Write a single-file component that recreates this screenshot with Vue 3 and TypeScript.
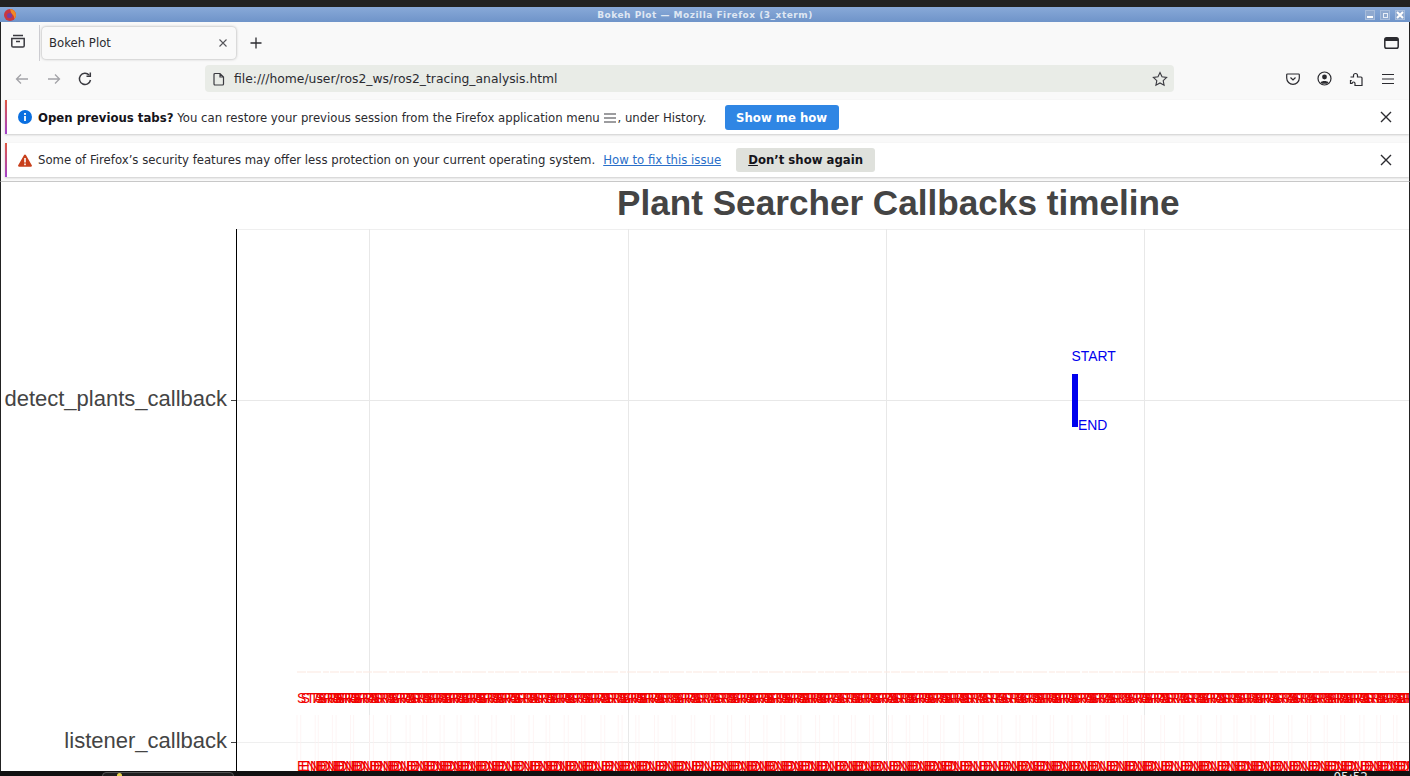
<script setup lang="ts">
function seq(start: number, end: number, step: number, seed: number): number[] {
  const out: number[] = []
  let x = start
  let s = seed
  while (x < end) {
    out.push(Math.round(x * 10) / 10)
    s = (s * 9301 + 49297) % 233280
    out.push(Math.round((x + 3 + (s / 233280) * 1.5) * 10) / 10)
    s = (s * 9301 + 49297) % 233280
    x += step * (0.92 + (s / 233280) * 0.16)
  }
  return out
}
const starts = seq(297, 1410, 18, 7)
const ends = seq(297, 1410, 18, 7)
const gridX = [369, 628, 886, 1144]
</script>

<template>
  <div class="screen">
    <div class="topstrip"></div>
    <div class="titlebar">
      <svg class="fx" width="14" height="14" viewBox="0 0 14 14">
        <circle cx="7" cy="7" r="6" fill="#c9373f" />
        <path d="M7 1a6 6 0 0 1 6 6c0 2-1 3-2 4 .5-2-.5-4-2-5-1-.7-1-2-2-5z" fill="#f08a24" />
        <circle cx="6.5" cy="7.5" r="2.6" fill="#7a3fa0" />
      </svg>
      <span class="wintitle">Bokeh Plot — Mozilla Firefox (3_xterm)</span>
      <div class="winbtns">
        <span class="winbtn"><i class="b-min"></i></span>
        <span class="winbtn"><i class="b-max"></i></span>
        <span class="winbtn"><svg width="8" height="8" viewBox="0 0 8 8"><path d="M1 1l6 6M7 1L1 7" stroke="#fff" stroke-width="2" /></svg></span>
      </div>
    </div>

    <div class="browser">
      <div class="tabrow">
        <span class="tabs-icon">
          <svg width="16" height="16" viewBox="0 0 16 16" fill="none" stroke="#3a3a40" stroke-width="1.5">
            <path d="M3 2.5h10M1.8 5.5h12.4v7.2a1.3 1.3 0 0 1-1.3 1.3H3.100a1.300 1.300 0 0 1-1.300-1.300z" />
            <path d="M6 8.500h4" />
          </svg>
        </span>
        <span class="tabsep"></span>
        <div class="tab">
          <span class="tabtitle">Bokeh Plot</span>
          <svg width="10" height="10" viewBox="0 0 10 10"><path d="M1.500 1.500l7 7M8.500 1.500l-7 7" stroke="#55555a" stroke-width="1.100" /></svg>
        </div>
        <svg class="plus" width="12" height="12" viewBox="0 0 12 12"><path d="M6 .5v11M.5 6h11" stroke="#2b2b30" stroke-width="1.300" /></svg>
        <span class="grow"></span>
        <svg class="winlist" width="15" height="12" viewBox="0 0 15 12" fill="none"><rect x=".8" y=".8" width="13.400" height="10.400" rx="1.800" stroke="#2b2b30" stroke-width="1.500" /><rect x="1" y="1" width="13" height="3" fill="#2b2b30" /></svg>
      </div>

      <div class="navrow">
        <svg width="16" height="16" viewBox="0 0 16 16" fill="none" stroke="#a3a3a8" stroke-width="1.300"><path d="M14 8H2.500M7 3.500L2.500 8 7 12.500" /></svg>
        <svg class="fwd" width="16" height="16" viewBox="0 0 16 16" fill="none" stroke="#a3a3a8" stroke-width="1.300"><path d="M2 8h11.500M9 3.500L13.500 8 9 12.500" /></svg>
        <svg class="reload" width="16" height="16" viewBox="0 0 16 16" fill="none" stroke="#3a3a40" stroke-width="1.500"><path d="M13.500 9a5.600 5.600 0 1 1-1.400-5" /><path d="M13.300 1.500v3.800H9.500" /></svg>
        <div class="urlbar">
          <svg width="14" height="14" viewBox="0 0 14 14" fill="none" stroke="#3a3a40" stroke-width="1.200"><path d="M3 1.500h5l3.500 3.500v7a1 1 0 0 1-1 1H3a1 1 0 0 1-1-1v-9.500a1 1 0 0 1 1-1zM8 1.500V5h3.500" /></svg>
          <span class="url">file:///home/user/ros2_ws/ros2_tracing_analysis.html</span>
          <span class="grow"></span>
          <svg width="16" height="16" viewBox="0 0 16 16" fill="none" stroke="#3a3a40" stroke-width="1.100"><path d="M8 1.500l2 4.300 4.600.6-3.400 3.200.9 4.700L8 12l-4.100 2.300.9-4.700L1.400 6.400 6 5.800z" /></svg>
        </div>
        <div class="navright">
          <svg width="14" height="14" viewBox="0 0 14 14" fill="none" stroke="#2b2b30" stroke-width="1.200"><path d="M1.500 2h11a.8.8 0 0 1 .8.800V6a6.300 6.300 0 0 1-12.600 0V2.800a.8.800 0 0 1 .8-.8z" /><path d="M4.500 5.500L7 8l2.500-2.500" /></svg>
          <svg width="15" height="15" viewBox="0 0 15 15"><circle cx="7.500" cy="7.500" r="6.500" fill="none" stroke="#2b2b30" stroke-width="1.200" /><circle cx="7.500" cy="6" r="2.400" fill="#2b2b30" /><path d="M3.500 11.500c1-2 7-2 8 0l-1.500 1.300h-5z" fill="#2b2b30" /></svg>
          <svg width="15" height="16" viewBox="0 0 15 16" fill="none" stroke="#2b2b30" stroke-width="1.200"><path d="M1.500 6h3V4.500a2 2 0 0 1 4 0V6h3.500a1 1 0 0 1 1 1v7.500H6v-2a1.500 1.500 0 0 0-3 0v0H1.500V9.500h1.200" /></svg>
          <svg width="14" height="12" viewBox="0 0 14 12" stroke="#2b2b30" stroke-width="1.100"><path d="M1 1.500h12M1 6h12M1 10.500h12" /></svg>
        </div>
      </div>

      <div class="notice first">
        <svg class="nicon" width="14" height="14" viewBox="0 0 14 14"><circle cx="7" cy="7" r="7" fill="#0a6fe0" /><rect x="6.100" y="6" width="1.800" height="5" fill="#fff" /><rect x="6.100" y="3" width="1.800" height="1.900" fill="#fff" /></svg>
        <span class="ntext"><b>Open previous tabs?</b> You can restore your previous session from the Firefox application menu
          <svg class="inlinemenu" width="12" height="10" viewBox="0 0 12 10" stroke="#3a3a40" stroke-width="1.100"><path d="M0 1h12M0 5h12M0 9h12" /></svg>, under History.</span>
        <button class="btn primary">Show me how</button>
        <span class="grow"></span>
        <svg class="nclose" width="12" height="12" viewBox="0 0 12 12"><path d="M1 1l10 10M11 1L1 11" stroke="#2b2b30" stroke-width="1.400" /></svg>
      </div>
      <div class="notice second">
        <svg class="nicon" width="14" height="13" viewBox="0 0 14 13"><path d="M7 .5a1 1 0 0 1 .9.500l5.900 10.300a1 1 0 0 1-.9 1.500H1.100a1 1 0 0 1-.9-1.500L6.100 1A1 1 0 0 1 7 .5z" fill="#c8401c" /><rect x="6.200" y="4" width="1.600" height="4.500" fill="#fff" /><rect x="6.200" y="9.500" width="1.600" height="1.700" fill="#fff" /></svg>
        <span class="ntext">Some of Firefox’s security features may offer less protection on your current operating system.</span>
        <a class="nlink">How to fix this issue</a>
        <button class="btn neutral"><u>D</u>on’t show again</button>
        <span class="grow"></span>
        <svg class="nclose" width="12" height="12" viewBox="0 0 12 12"><path d="M1 1l10 10M11 1L1 11" stroke="#2b2b30" stroke-width="1.400" /></svg>
      </div>
    </div>

    <div class="page">
      <div class="plot-title">Plant Searcher Callbacks timeline</div>
      <svg class="plot" width="1408" height="542" viewBox="1 229 1408 542">
        <line x1="237" x2="1409" y1="229.500" y2="229.500" stroke="#efefef" />
        <line v-for="x in gridX" :key="x" :x1="x + 0.5" :x2="x + 0.5" y1="229" y2="771" stroke="#e8e8e8" />
        <line x1="237" x2="1409" y1="400.500" y2="400.500" stroke="#e8e8e8" />
        <line x1="237" x2="1409" y1="742.500" y2="742.500" stroke="#efefef" />
        <line x1="236.500" x2="236.500" y1="229" y2="771" stroke="#000" />
        <line x1="231" x2="236" y1="400.500" y2="400.500" stroke="#444" />
        <line x1="231" x2="236" y1="742.500" y2="742.500" stroke="#444" />
        <text class="ylab" x="227" y="405.500" text-anchor="end">detect_plants_callback</text>
        <text class="ylab" x="227" y="747.500" text-anchor="end">listener_callback</text>

        <rect x="1072" y="374" width="6" height="53" fill="#0000ee" />
        <text class="mark blue" x="1071.500" y="361">START</text>
        <text class="mark blue" x="1078" y="430">END</text>

        <g class="faint">
          <line v-for="x in ends" :key="'v' + x" :x1="x" :x2="x" y1="715" y2="770" stroke="#fdf1f1" stroke-width="0.700" />
          <line x1="297" x2="1409" y1="672" y2="672" stroke="#fbe8e0" stroke-width="1.200" stroke-dasharray="9 1 14 2 6 1" />
        </g>
        <text v-for="(x, i) in starts" :key="'s' + i" class="mark red" :x="x" y="703">START</text>
        <text v-for="(x, i) in ends" :key="'e' + i" class="mark red" :x="x" y="771">END</text>
      </svg>
    </div>

    <div class="taskbar">
      <div class="taskitem"><i class="taskdot"></i></div>
      <span class="clock">05:52</span>
    </div>
  </div>
</template>

<style>
html, body { margin: 0; padding: 0; overflow: hidden; background: #fff; }
</style>

<style scoped>
.screen {
  width: 1410px;
  height: 776px;
  display: flex;
  flex-direction: column;
  overflow: hidden;
  position: relative;
  font-family: "DejaVu Sans", sans-serif;
  background: #fff;
}
.grow { flex: 1; }
.topstrip { height: 7px; background: #222222; flex: none; }
.titlebar {
  height: 15px;
  flex: none;
  background: linear-gradient(#88a9d8, #6f94c9);
  position: relative;
  display: flex;
  align-items: center;
  justify-content: center;
}
.fx { position: absolute; left: 3px; top: 1px; }
.wintitle { font-size: 9px; font-weight: bold; color: #dfe7f3; letter-spacing: 0.5px; }
.winbtns { position: absolute; right: 5px; top: 3px; display: flex; gap: 5px; }
.winbtn {
  width: 10px; height: 10px; background: #8fa9cf;
  border: 1px solid #a7bcdb; box-sizing: border-box;
  display: flex; align-items: center; justify-content: center;
}
.b-min { width: 6px; height: 2px; background: #fff; margin-top: 4px; }
.b-max { width: 5px; height: 5px; border: 1px solid #e8eef7; box-sizing: border-box; }
.browser { flex: none; background: #f9f9f9; border-left: 1px solid #222; border-right: 1px solid #222; border-bottom: 1px solid #c8c8c8; height: 160px; box-sizing: border-box; }
.tabrow { height: 38px; display: flex; align-items: center; position: relative; }
.tabs-icon { margin-left: 9px; width: 16px; height: 16px; }
.tabsep { width: 1px; height: 36px; background: #cfcfd4; margin-left: 13px; margin-top: 4px; }
.tab {
  width: 194px; height: 32px; margin-left: 2px; margin-top: 3px;
  background: #f9f9f9; border-radius: 4px;
  box-shadow: 0 0 3px 0 rgba(0,0,0,.35);
  display: flex; align-items: center; justify-content: space-between;
  padding: 0 8px 0 7px; box-sizing: border-box;
  font-size: 11.7px; color: #2b2b30;
}
.plus { margin-left: 14px; margin-top: 3px; }
.winlist { margin-right: 10px; margin-top: 3px; }
.navrow { height: 37px; display: flex; align-items: center; padding-left: 13px; }
.fwd { margin-left: 16px; }
.reload { margin-left: 15px; }
.urlbar {
  width: 969px; height: 27px; margin-left: 112px;
  background: #e9ece7; border-radius: 4px;
  display: flex; align-items: center; padding: 0 6px 0 7px; box-sizing: border-box;
}
.url { font-size: 12.35px; color: #2b2b30; margin-left: 8px; }
.navright { display: flex; align-items: center; margin-left: 112px; gap: 17px; }
.notice {
  height: 34px; display: flex; align-items: center;
  background: #fff; margin-left: 4px; margin-right: 0;
  border-left: 2px solid; border-image: linear-gradient(#e0573c, #a040d0) 1;
  box-shadow: 0 1px 2px rgba(0,0,0,.18);
  font-size: 11.71px; color: #2b2b30; box-sizing: border-box;
}
.first { margin-top: 3px; }
.first .ntext { margin-top: 2px; }
.second { margin-top: 9px; }
.nicon { margin-left: 11px; flex: none; }
.ntext { margin-left: 6px; white-space: nowrap; }
.ntext b { color: #15141a; }
.inlinemenu { vertical-align: -1px; margin: 0 1px 0 1px; }
.btn {
  border: none; border-radius: 3px; font: bold 11.7px "DejaVu Sans", sans-serif;
  height: 24px; padding: 0;
}
.primary { background: #2f86e4; color: #fff; width: 114px; margin-left: 18px; height: 25px; margin-top: 1px; }
.neutral { background: #dfe1dc; color: #15141a; width: 139px; margin-left: 15px; }
.nlink { color: #2a6fc9; text-decoration: underline; margin-left: 8px; }
.nclose { margin-right: 17px; }
.page { flex: 1; min-height: 0; position: relative; border-left: 1px solid #222; border-right: 1px solid #222; display: flex; flex-direction: column; }
.plot-title {
  height: 47px; flex: none; box-sizing: border-box; padding-left: 616px;
  font: bold 35.15px "Liberation Sans", sans-serif; color: #444; white-space: nowrap; line-height: 42px;
}
.plot { display: block; flex: none; }
.ylab { font: 22px "Liberation Sans", sans-serif; fill: #444; }
.mark { font: 13.900px "Liberation Sans", sans-serif; }
.blue { fill: #0000ee; }
.red { fill: #f00000; }
.taskbar { position: absolute; left: 0; right: 0; bottom: 0; height: 5px; background: #111; overflow: hidden; }
.taskitem { position: absolute; left: 102px; top: 1px; width: 132px; height: 10px; background: #1f1f1f; border: 1px solid #555; border-radius: 4px 4px 0 0; box-sizing: border-box; }
.taskdot { position: absolute; left: 14px; top: 0; width: 5px; height: 5px; background: #e8d44d; border-radius: 50%; }
.clock { position: absolute; right: 42px; top: -1px; color: #eee; font: 12px "DejaVu Sans", sans-serif; }
</style>
